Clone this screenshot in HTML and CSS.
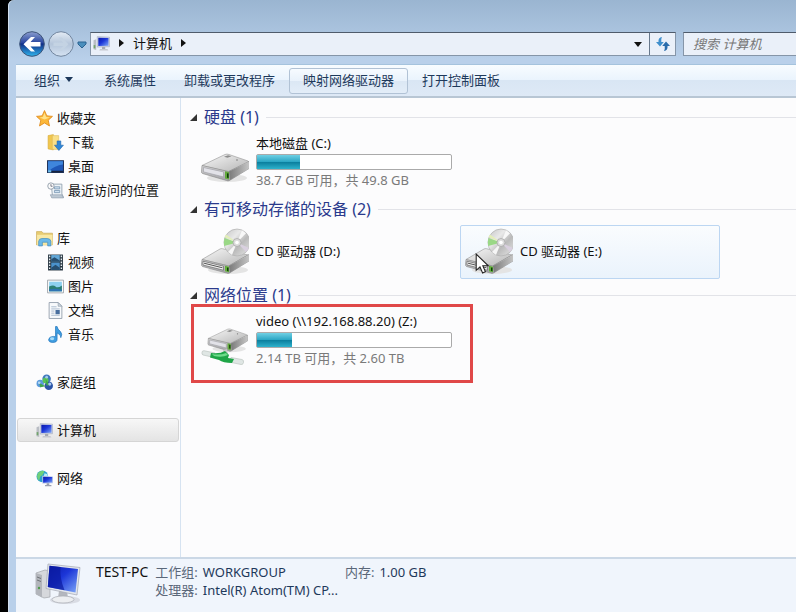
FILE: index.html
```html
<!DOCTYPE html>
<html lang="zh-CN">
<head>
  <meta charset="UTF-8">
  <meta name="viewport" content="width=device-width, initial-scale=1.0">
  <title>计算机</title>
  <link rel="stylesheet" href="styles.css">
</head>

<body>

  <!-- Shared icons -->
  <svg class="icon-defs" aria-hidden="true">
    <defs>
      <linearGradient id="g-screen" x1="0" y1="0" x2="1" y2="1">
        <stop offset="0" stop-color="#0a18a8" />
        <stop offset="0.45" stop-color="#1c36d8" />
        <stop offset="1" stop-color="#7fa8f8" />
      </linearGradient>
      <linearGradient id="g-top" x1="0" y1="0" x2="1" y2="1">
        <stop offset="0" stop-color="#f8f8f8" />
        <stop offset="1" stop-color="#b4b4b4" />
      </linearGradient>
      <linearGradient id="g-front" x1="0" y1="0" x2="0" y2="1">
        <stop offset="0" stop-color="#e6e6e6" />
        <stop offset="1" stop-color="#a0a0a4" />
      </linearGradient>
      <linearGradient id="g-side" x1="0" y1="0" x2="1" y2="0">
        <stop offset="0" stop-color="#7a7a7a" />
        <stop offset="1" stop-color="#c4c4c4" />
      </linearGradient>
      <linearGradient id="g-disc" x1="0" y1="0" x2="1" y2="1">
        <stop offset="0" stop-color="#c4c4c4" />
        <stop offset="0.35" stop-color="#e9e9e9" />
        <stop offset="0.6" stop-color="#bababa" />
        <stop offset="1" stop-color="#e8e8e8" />
      </linearGradient>
      <linearGradient id="g-back" x1="0" y1="0" x2="0" y2="1">
        <stop offset="0" stop-color="#8d9fd0" />
        <stop offset="0.45" stop-color="#28469f" />
        <stop offset="0.5" stop-color="#0f2f86" />
        <stop offset="1" stop-color="#2fb5ee" />
      </linearGradient>
      <linearGradient id="g-fwd" x1="0" y1="0" x2="0" y2="1">
        <stop offset="0" stop-color="#e4ecf5" />
        <stop offset="0.5" stop-color="#b4c5da" />
        <stop offset="1" stop-color="#d5e3f2" />
      </linearGradient>

      <symbol id="i-computer" viewBox="0 0 16 16">
        <path d="M0.5 5l2.500-1v10l-2.500-.5z" fill="#b9bdc4" />
        <path d="M0.600 9.500h1.600v3h-1.600z" fill="#72a46c" />
        <path d="M4 1.500l11.500.5v9l-11.500.4z" fill="#d2d8e6" stroke="#9aa3b8" stroke-width=".5" />
        <path d="M5 2.500l9.600.4v7.100l-9.600.3z" fill="url(#g-screen)" />
        <path d="M8.500 11.200h3v2h-3z" fill="#a5a9b2" />
        <path d="M6.500 13.200h7l1 1.300h-8.500z" fill="#c5c8cf" />
      </symbol>

      <symbol id="i-drive" viewBox="0 0 48 30">
        <ellipse cx="26" cy="25" rx="20" ry="4" fill="#e4e4e4" />
        <path d="M1 12.500L24 1.500q2-.8 4 0L47 8q1.500.8 0 2L27.500 19z" fill="url(#g-top)" stroke="#a0a0a0" stroke-width=".7" />
        <path d="M1 12.500L27.500 18.500 48 8.500v7L28.500 27.500q-1.500.8-3 0L1.500 20.500q-1.200-.5-1-2z" fill="url(#g-front)" stroke="#858585" stroke-width=".6" />
        <path d="M28 18.500L47.800 9v6.500L29 27z" fill="url(#g-side)" />
        <path d="M2.500 14.500l20 4.400v5l-20-5z" fill="#e2e2e8" stroke="#98989f" stroke-width=".6" />
        <path d="M24 18.200l4 .8v7.600l-4-1z" fill="#62a83c" />
        <path d="M26 20.200l1.600.3v4.500l-1.600-.3z" fill="#123d0c" />
        <path d="M23 3.800l4-1.500 3.500 1-4 1.500z" fill="#8c8c8c" />
        <path d="M25 6l7 2.500" stroke="#d8d8d8" />
        <circle cx="36" cy="7" r=".8" fill="#777" />
      </symbol>

      <symbol id="i-cd-drive" viewBox="0 0 48 48">
        <ellipse cx="27" cy="42" rx="20" ry="4" fill="#e4e4e4" />
        <path d="M1 31.500L19 21q1-.6 2.500-.3L47 27 28 38z" fill="url(#g-top)" stroke="#a0a0a0" stroke-width=".7" />
        <ellipse cx="36" cy="14.500" rx="13" ry="13.500" fill="url(#g-disc)" stroke="#b0b0b0" stroke-width=".7" />
        <path d="M36 14.500l-12.500-4.500q-1.200 4-.3 8z" fill="#9ad886" />
        <path d="M36 14.500l-12.500-5.500 1.500-2.500z" fill="#e3efb8" />
        <path d="M36 14.500L27 24l4 3z" fill="#f6f6f6" />
        <path d="M36 14.500l5-12.300 4 3z" fill="#f8f8f8" />
        <path d="M36 14.500l12 5.500-3 4z" fill="#d9d0df" />
        <circle cx="36" cy="14.500" r="4" fill="#dcdcdc" stroke="#a4a4a4" stroke-width=".7" />
        <circle cx="36" cy="14.500" r="1.800" fill="#fff" />
        <path d="M1 31.500l26.500 6.500L48 26.500V33L28.500 45q-1.500.8-3 0L1.500 38.500q-1-.5-1-2z" fill="url(#g-front)" stroke="#858585" stroke-width=".6" />
        <path d="M28 38L48 27v6L29 44.500z" fill="url(#g-side)" />
        <path d="M2 33.200l20.500 5v4L2 37z" fill="#f2f2f2" stroke="#666" stroke-width=".7" />
        <path d="M3 35.200l18.500 4.600" stroke="#555" />
        <path d="M24 37.800l4 1v5.500l-4-1z" fill="#62b038" />
        <path d="M26 39.500l1.500.3v3.500l-1.500-.3z" fill="#103f0b" />
      </symbol>

      <symbol id="i-net-drive" viewBox="0 0 48 40">
        <use href="#i-drive" x="6" y="0" width="41" height="25" />
        <path d="M22 22l4-1 1 6-4 1z" fill="#c8c8c8" />
        <path d="M1 24.500q0-2 2-1.800L14 25l-1 4.500L2 27q-1.500-.5-1-2.500z" fill="#dfe6e4" stroke="#b3bdb9" stroke-width=".6" />
        <path d="M30 29.500l11 2q2 .5 1.500 3t-2.500 2L28 34z" fill="#dfe6e4" stroke="#b3bdb9" stroke-width=".6" />
        <path d="M10 25q9 1 14-2l4 4-1 3 6 1-2 4q-9 0-13-3L9 29.500z" fill="#1fa548" />
        <path d="M11 26q8 1.500 14-1l2 2q-6 3-14 1z" fill="#6fdc8b" />
      </symbol>
    </defs>
  </svg>

  <div class="window">

    <header class="nav-bar">
      <div class="nav-buttons">
        <button class="round-btn" aria-label="后退">
          <svg viewBox="0 0 26 26">
            <circle cx="13" cy="13" r="12.300" fill="url(#g-back)" stroke="#3d5478" />
            <path d="M4.500 13.200l7.500-7.200h4l-4.500 5h10v4.400h-10l4.500 5h-4z" fill="#fff" />
          </svg>
        </button>
        <button class="round-btn" aria-label="前进">
          <svg viewBox="0 0 26 26">
            <circle cx="13" cy="13" r="12.300" fill="url(#g-fwd)" stroke="#71859e" />
            <path d="M20.500 13.200l-6.700-6.700h-3.300l4.700 4.900h-9.700v3.700h9.700l-4.700 4.900h3.300z" fill="#c4d3e3" />
          </svg>
        </button>
        <button class="history-btn" aria-label="最近的页面">
          <svg width="10" height="8" viewBox="0 0 10 8">
            <path d="M1 1h8v2L5 7 1 3z" fill="#4a8ebc" stroke="#2b6290" />
          </svg>
        </button>
      </div>

      <div class="address-bar">
        <div class="crumbs">
          <svg class="icon"><use href="#i-computer" /></svg>
          <span class="crumb-arrow"></span>
          <button class="crumb">计算机</button>
          <span class="crumb-arrow"></span>
        </div>
        <button class="address-drop" aria-label="以前的位置"><span class="down-arrow"></span></button>
        <button class="refresh-btn" aria-label="刷新">
          <svg width="16" height="16" viewBox="0 0 16 16">
            <path d="M7 1Q3 1.500 3.500 6H1l4 4.500L8.800 6H6.300Q5.800 3 7 1z" fill="#3f8fcc" />
            <path d="M9 15q4-.5 3.500-5H15L11 5.500 7.200 10h2.500q.5 3-.7 5z" fill="#2a6cab" />
          </svg>
        </button>
      </div>

      <input class="search-box" type="text" placeholder="搜索 计算机" aria-label="搜索 计算机">
    </header>

    <div class="toolbar">
      <button class="tool-btn organize">组织 <span class="down-arrow"></span></button>
      <button class="tool-btn">系统属性</button>
      <button class="tool-btn">卸载或更改程序</button>
      <button class="tool-btn active">映射网络驱动器</button>
      <button class="tool-btn">打开控制面板</button>
    </div>

    <div class="content">

      <nav class="sidebar">
        <div class="nav-group">
          <a href="#" class="nav-item">
            <svg class="icon" viewBox="0 0 16 16"><path d="M8 .5l2.200 5 5.300.5-4 3.600 1.200 5.400L8 12.200 3.300 15l1.200-5.400-4-3.600 5.300-.5z" fill="#fcb83a" stroke="#e08a1c" stroke-width=".8" /><path d="M8 2.500l1.500 4 3.500.5-5 2-4.500-2 3-.5z" fill="#ffe28a" /></svg>
            收藏夹
          </a>
          <a href="#" class="nav-item sub">
            <svg class="icon" viewBox="0 0 16 16"><path d="M1 1.500L6 .5v14.500l-5-1z" fill="#f0c64f" stroke="#d3a93a" stroke-width=".5" /><path d="M5 1.500h6v13H5z" fill="#f9df87" stroke="#d9b655" stroke-width=".5" /><path d="M9.500 6.500h3.500v4h2.500L11.200 15.500 7 10.500h2.500z" fill="#2f86d6" stroke="#1c61a8" stroke-width=".5" /></svg>
            下载
          </a>
          <a href="#" class="nav-item sub">
            <svg class="icon" viewBox="0 0 16 16"><path d="M.5 2.500h15v11H.5z" fill="#1f58b8" stroke="#20345c" /><path d="M1 3h14v3Q7 7 2 12H1z" fill="#3f86dc" /><path d="M1 12h14v1.500H1z" fill="#17233f" /><path d="M1 11.500h3v2H1z" fill="#6fc0ee" /></svg>
            桌面
          </a>
          <a href="#" class="nav-item sub">
            <svg class="icon" viewBox="0 0 16 16"><path d="M4 2h10v9l1.500 3.500H5V12z" fill="#eef3f7" stroke="#8d9dac" stroke-width=".8" /><path d="M7 4.500h5v2H7zM7 8h5v2H7z" fill="#cfe1f0" stroke="#7190ae" stroke-width=".7" /><path d="M3 12h11l1.500 3H4.500z" fill="#bcc8d3" stroke="#8494a4" stroke-width=".5" /><circle cx="3.700" cy="3.800" r="3" fill="#fafafa" stroke="#8b97a5" stroke-width=".8" /><path d="M3.700 2v2h1.500" fill="none" stroke="#556" stroke-width=".7" /></svg>
            最近访问的位置
          </a>
        </div>

        <div class="nav-group">
          <a href="#" class="nav-item">
            <svg class="icon" viewBox="0 0 16 16"><path d="M.5 1.500h5l1.500 1.500h8.500v11H.5z" fill="#e8cd72" stroke="#c8a954" stroke-width=".6" /><path d="M1 4.500h14.500v9.500H1z" fill="#f8e8a4" /><path d="M2.500 15V10.500Q3 8 5.500 8h5q3 0 3.500 2.500V15h-3v-3.500H6V15z" fill="#6bb8e8" stroke="#3a88bd" stroke-width=".6" /></svg>
            库
          </a>
          <a href="#" class="nav-item sub">
            <svg class="icon" viewBox="0 0 16 16"><path d="M1 .5h14v15H1z" fill="#26343f" /><path d="M4 1h8v6H4z" fill="#63a8d8" /><path d="M4 8h8v7H4z" fill="#4a92cc" /><path d="M4 5l3-2 5 3v1H4zM4 13l4-3 4 3v2H4z" fill="#274f70" /><path d="M2.500 1.500v13M13.500 1.500v13" stroke="#e6edf2" stroke-width="1.300" stroke-dasharray="1.500 1.300" /></svg>
            视频
          </a>
          <a href="#" class="nav-item sub">
            <svg class="icon" viewBox="0 0 16 16"><path d="M.5 2h15v12H.5z" fill="#fafafa" stroke="#9a9fa6" stroke-width=".8" /><path d="M2 3.500h12v9H2z" fill="#8ed0f0" /><path d="M2 8q4-2 6 0t6-1v5.500H2z" fill="#2c7f74" /><path d="M2 10.500q6-1 12 .5v1.500H2z" fill="#2f74b2" /></svg>
            图片
          </a>
          <a href="#" class="nav-item sub">
            <svg class="icon" viewBox="0 0 16 16"><path d="M2 .5h8.500l3.500 3.500v11.500H2z" fill="#f8fafc" stroke="#8e9aa8" stroke-width=".8" /><path d="M10.500.5v3.500h3.500z" fill="#d0d8e0" stroke="#8e9aa8" stroke-width=".6" /><path d="M4 4.500h5M4 6.500h8M4 8.500h3M4 10.500h3M4 12.500h8" stroke="#9fb2c8" stroke-width=".8" /><path d="M8 7.500h4v4H8z" fill="#496f9e" /></svg>
            文档
          </a>
          <a href="#" class="nav-item sub">
            <svg class="icon" viewBox="0 0 16 16"><path d="M8 .5h1.500q.5 3 3 4.500 2.500 2.500.5 6 .3-3-3.500-4.500v6q0 3-4 3t-4-2.700q.5-3 4.500-3l2 .2z" fill="#3f9de0" stroke="#1d6fb8" stroke-width=".6" /><ellipse cx="4.800" cy="12" rx="2" ry="1.300" fill="#a8dcf8" /></svg>
            音乐
          </a>
        </div>

        <div class="nav-group">
          <a href="#" class="nav-item">
            <svg class="icon" viewBox="0 0 16 16"><circle cx="10" cy="4.500" r="4" fill="#3f78bd" /><circle cx="4" cy="9" r="3.500" fill="#5b9bdc" /><circle cx="12" cy="11" r="4" fill="#2c55a8" /><circle cx="9" cy="6" r="2.800" fill="#58c258" /><path d="M3 8.500l6 3-5 1zM9 5l4 5-3 1z" fill="#3fa64b" /><circle cx="13" cy="9.500" r="1.500" fill="#a9c9ef" /><circle cx="3" cy="8.200" r="1.200" fill="#b7d9f5" /><circle cx="10" cy="3" r="1.300" fill="#a4cbe9" /></svg>
            家庭组
          </a>
        </div>

        <div class="nav-group">
          <a href="#" class="nav-item selected">
            <svg class="icon"><use href="#i-computer" /></svg>
            计算机
          </a>
        </div>

        <div class="nav-group">
          <a href="#" class="nav-item">
            <svg class="icon" viewBox="0 0 16 16"><circle cx="6" cy="6" r="5.500" fill="#2d9fd0" /><path d="M2 2.500q4-3 6-1L6 5 4 6l-1 4Q-.5 7 2 2.500z" fill="#6fd07a" /><path d="M8 3l3 1v3H7z" fill="#b9edf5" /><path d="M6 5.500l10 .5v6.500l-10 .5z" fill="#c9d2ea" /><path d="M6.700 6.300l8.600.4v5l-8.600.4z" fill="url(#g-screen)" /><path d="M10 12.500h2.500v1.500h2v1.300H8.500V14H10z" fill="#9aa0b0" /></svg>
            网络
          </a>
        </div>
      </nav>

      <main class="files">
        <section>
          <h2 class="group-title"><button>硬盘 (1)</button></h2>
          <div class="drives">
            <div class="drive tall">
              <svg class="drive-icon" viewBox="0 -14 48 48"><use href="#i-drive" width="48" height="30" /></svg>
              <div class="drive-info">
                <p class="drive-name">本地磁盘 (C:)</p>
                <div class="bar"><div class="bar-fill" style="width: 22%"></div></div>
                <p class="drive-space">38.7 GB 可用，共 49.8 GB</p>
              </div>
            </div>
          </div>
        </section>

        <section>
          <h2 class="group-title"><button>有可移动存储的设备 (2)</button></h2>
          <div class="drives">
            <div class="drive">
              <svg class="drive-icon"><use href="#i-cd-drive" /></svg>
              <div class="drive-info">
                <p class="drive-name">CD 驱动器 (D:)</p>
              </div>
            </div>
            <div class="drive hover">
              <svg class="drive-icon"><use href="#i-cd-drive" /></svg>
              <div class="drive-info">
                <p class="drive-name">CD 驱动器 (E:)</p>
              </div>
              <svg class="cursor" viewBox="0 0 14 20"><path d="M1 1v15.500l3.600-3.300 2.500 5.800 2.700-1.200-2.500-5.600H12.500z" fill="#fff" stroke="#222" /></svg>
            </div>
          </div>
        </section>

        <section>
          <h2 class="group-title"><button>网络位置 (1)</button></h2>
          <div class="drives">
            <div class="drive tall marked">
              <svg class="drive-icon" viewBox="0 -11 48 48"><use href="#i-net-drive" width="48" height="40" /></svg>
              <div class="drive-info">
                <p class="drive-name">video (\\192.168.88.20) (Z:)</p>
                <div class="bar"><div class="bar-fill" style="width: 18%"></div></div>
                <p class="drive-space">2.14 TB 可用，共 2.60 TB</p>
              </div>
            </div>
          </div>
        </section>
      </main>

    </div>

    <footer class="details">
      <svg class="pc-icon" viewBox="0 0 46 42">
        <ellipse cx="30" cy="37" rx="15" ry="4" fill="#d9dce4" />
        <path d="M1 10l9-3 5 1v26l-6 1-8-4z" fill="#d6d8dc" stroke="#a2a5ab" stroke-width=".7" />
        <path d="M1 10l6 2v22.500l-6-3.500z" fill="#b2b5bb" />
        <path d="M2 14l4 1.500M2 17l4 1.500" stroke="#6e7277" />
        <circle cx="4" cy="25" r="1.200" fill="#4e9b48" />
        <path d="M24 28h8l1 7h-10z" fill="#b4b7be" />
        <ellipse cx="28" cy="36.500" rx="11" ry="3.500" fill="#eceef1" stroke="#a9acb3" stroke-width=".7" />
        <path d="M13 1L45 4.500 42 32 11 25.500z" fill="#e3e6ec" stroke="#a3a8b3" stroke-width=".7" />
        <path d="M14.500 2.800L43 6 40.500 29.500 12.800 24z" fill="url(#g-screen)" />
        <path d="M14.500 2.800l11 1.200q-1 11 4 23.300L12.800 24z" fill="#0a1a9e" opacity=".7" />
      </svg>
      <strong class="pc-name">TEST-PC</strong>
      <dl class="specs">
        <div><dt>工作组:</dt><dd>WORKGROUP</dd></div>
        <div><dt>处理器:</dt><dd>Intel(R) Atom(TM) CP...</dd></div>
      </dl>
      <dl class="specs">
        <div><dt>内存:</dt><dd>1.00 GB</dd></div>
      </dl>
    </footer>

  </div>

</body>
</html>
```

FILE: styles.css
```css
* {
  box-sizing: border-box;
}

body {
  margin: 0;
  background: #000;
  color: #111;
  font-family: "Noto Sans", "Noto Sans CJK SC", sans-serif;
  font-size: 13px;
  line-height: 18px;
}

button,
input {
  font: inherit;
  color: inherit;
}

button {
  padding: 0;
  border: none;
  background: none;
  cursor: pointer;
}

h2,
p,
dl,
dd {
  margin: 0;
}

.icon-defs {
  position: absolute;
  width: 0;
  height: 0;
}

.window {
  display: flex;
  flex-direction: column;
  min-height: 100vh;
  margin-left: 8px;
  padding-left: 8px;
  border-top-left-radius: 6px;
  background: linear-gradient(#9ab5d1, #b9d0ea 60px);
  box-shadow: inset 1px 0 0 #d3e0ee;
}

/* Address row */
.nav-bar {
  display: flex;
  align-items: center;
  height: 64px;
  padding-top: 24px;
}

.nav-buttons {
  display: flex;
  align-items: center;
  width: 74px;
  padding-left: 3px;
  gap: 3px;
}

.round-btn {
  width: 26px;
  height: 26px;
  border-radius: 50%;
}

.round-btn svg {
  display: block;
}

.address-bar {
  display: flex;
  flex: 1;
  height: 24px;
  border: 1px solid #8595a8;
  border-top-color: #4f5b6b;
  background: #eaf0f9;
}

.crumbs {
  display: flex;
  flex: 1;
  align-items: center;
  padding: 0 0 2px 2px;
  gap: 9px;
}

.crumb-arrow {
  border: 4px solid transparent;
  border-left: 5px solid #111;
  border-right: none;
}

.down-arrow {
  display: inline-block;
  border: 4px solid transparent;
  border-top: 5px solid currentColor;
  border-bottom: none;
}

.address-drop {
  display: flex;
  align-items: center;
  justify-content: center;
  width: 22px;
}

.refresh-btn {
  display: flex;
  align-items: center;
  justify-content: center;
  width: 26px;
  border-left: 1px solid #67788c;
}

.search-box {
  width: 113px;
  height: 24px;
  margin-left: 7px;
  padding: 0 9px;
  border: 1px solid #8595a8;
  border-top-color: #4f5b6b;
  border-right: none;
  border-radius: 0;
  background: #eaf0f9;
}

.search-box::placeholder {
  color: #777;
  font-style: italic;
}

/* Command bar */
.toolbar {
  display: flex;
  align-items: center;
  height: 34px;
  padding-left: 4px;
  border-top: 1px solid #a5c3dd;
  border-bottom: 2px solid #b8c6d4;
  background: linear-gradient(#f8fcff, #eaf4fd 48%, #d9e6f4 50%, #dee9f6);
  color: #1e395b;
}

.tool-btn {
  height: 26px;
  padding: 0 13px 2px;
  border: 1px solid transparent;
  border-radius: 3px;
  white-space: nowrap;
}

.tool-btn.active {
  border-color: #b1c2d5;
  background: linear-gradient(#f7fbff, #e9f2fb 48%, #dbe7f4 50%, #e3edf8);
}

.organize {
  display: flex;
  align-items: center;
  gap: 5px;
  padding-right: 16px;
}

.content {
  display: flex;
  flex: 1;
  background: #fcfcfd;
}

/* Navigation pane */
.sidebar {
  display: flex;
  flex-direction: column;
  gap: 24px;
  width: 165px;
  padding: 8px 1px;
  border-right: 1px solid #d6e3f1;
}

.nav-item {
  display: flex;
  align-items: center;
  gap: 4px;
  height: 24px;
  padding-left: 18px;
  border: 1px solid transparent;
  border-radius: 3px;
  color: #111;
  text-decoration: none;
  white-space: nowrap;
}

.nav-item.sub {
  padding-left: 29px;
}

.nav-item.selected {
  border-color: #d5d5d5;
  background: linear-gradient(#f7f7f7, #e4e4e4);
}

.icon {
  flex: none;
  width: 17px;
  height: 17px;
}

/* Drive list */
.files {
  flex: 1;
  padding-top: 7px;
}

.group-title {
  display: flex;
  align-items: center;
  height: 24px;
  padding-left: 9px;
  gap: 7px;
  color: #2b3a8c;
  font-size: 16px;
  font-weight: normal;
}

.group-title::before {
  content: "";
  border-left: 7px solid transparent;
  border-bottom: 7px solid #333;
}

.group-title::after {
  content: "";
  flex: 1;
  height: 1px;
  background: #e2e3e8;
}

.drives {
  display: flex;
  flex-wrap: wrap;
  gap: 4px;
  padding: 4px 0 4px 15px;
}

.drive {
  position: relative;
  display: flex;
  align-items: center;
  gap: 7px;
  width: 260px;
  height: 54px;
  padding-left: 4px;
  border: 1px solid #0000;
  border-radius: 2px;
}

.drive.tall {
  height: 60px;
}

.drive.hover {
  border-color: #bcd6f2;
  background: linear-gradient(#fafcfe, #eaf3fc);
}

.drive-icon {
  flex: none;
  width: 48px;
  height: 48px;
}

.drive-info {
  padding-bottom: 3px;
}

.drive-space {
  color: #7a7a7a;
}

.bar {
  width: 196px;
  height: 16px;
  margin: 2px 0 1px;
  border: 1px solid #aaa;
  border-radius: 2px;
  background: #fff;
}

.bar-fill {
  height: 100%;
  background: linear-gradient(#6fd0e4, #2ba6c4 48%, #0b7f9e 52%, #2eb2cc);
}

.cursor {
  position: absolute;
  left: 14px;
  top: 27px;
  width: 15px;
  height: 21px;
}

/* Red highlight frame around the mapped drive */
.marked::after {
  content: "";
  position: absolute;
  inset: -8px -18px -13px -6px;
  border: 3px solid #e04848;
}

/* Details pane */
.details {
  display: flex;
  height: 55px;
  padding: 4px 0 0 19px;
  border-top: 2px solid #cbd8e6;
  background: #f0f5fc;
}

.pc-icon {
  width: 46px;
  height: 42px;
  margin-right: 15px;
}

.pc-name {
  margin-right: 7px;
  font-size: 14px;
  font-weight: normal;
}

.specs {
  margin-right: 7px;
}

.specs div {
  display: flex;
  gap: 5px;
}

.specs dt {
  color: #5a6779;
}

.specs dd {
  color: #1e395b;
}
```
